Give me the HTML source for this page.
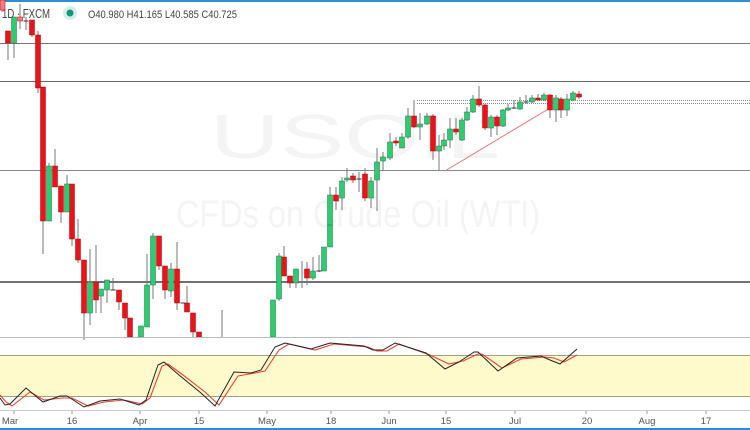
<!DOCTYPE html>
<html><head><meta charset="utf-8"><style>
html,body{margin:0;padding:0;background:#fff;}
body{width:750px;height:430px;overflow:hidden;position:relative;font-family:"Liberation Sans",sans-serif;}
svg{position:absolute;left:0;top:0;}
</style></head><body>
<svg width="750" height="430" viewBox="0 0 750 430" xmlns="http://www.w3.org/2000/svg">
<rect x="0" y="0" width="750" height="2" fill="#2a8fd8"/>
<text x="210" y="158" font-size="62" fill="#f4f4f4" textLength="290" lengthAdjust="spacingAndGlyphs" font-family="Liberation Sans">USOIL</text>
<text x="176" y="227" font-size="38" fill="#f4f4f4" textLength="364" lengthAdjust="spacingAndGlyphs" font-family="Liberation Sans">CFDs on Crude Oil (WTI)</text>
<g stroke-width="1">
<line x1="0" y1="43.5" x2="750" y2="43.5" stroke="#777"/>
<line x1="0" y1="81.5" x2="750" y2="81.5" stroke="#666"/>
<line x1="0" y1="170.5" x2="750" y2="170.5" stroke="#888"/>
<line x1="0" y1="282" x2="750" y2="282" stroke="#444" stroke-width="1.5"/>
<line x1="417" y1="100.5" x2="750" y2="100.5" stroke="#888" stroke-dasharray="1,1"/>
<line x1="417" y1="103.5" x2="750" y2="103.5" stroke="#888" stroke-dasharray="1,1"/>
<line x1="445" y1="171" x2="550" y2="108" stroke="#f07070"/>
</g>
<!-- header -->
<text x="2" y="18" font-size="12.5" fill="#444" textLength="48" lengthAdjust="spacingAndGlyphs">1D · FXCM</text>
<circle cx="70" cy="13" r="7" fill="#d6efea"/>
<circle cx="70" cy="13" r="3.5" fill="#0f9a7c"/>
<text x="88" y="18" font-size="11" fill="#444" textLength="149" lengthAdjust="spacingAndGlyphs">O40.980 H41.165 L40.585 C40.725</text>
<g stroke="#777" stroke-width="1">
<line x1="2" y1="0" x2="2" y2="12"/><line x1="8" y1="31" x2="8" y2="60"/><line x1="14" y1="17" x2="14" y2="58"/><line x1="20" y1="4" x2="20" y2="29"/><line x1="26" y1="17" x2="26" y2="30"/><line x1="32" y1="20" x2="32" y2="37"/><line x1="38" y1="31" x2="38" y2="93"/><line x1="43" y1="87" x2="43" y2="254"/><line x1="49" y1="163" x2="49" y2="221"/><line x1="55" y1="149" x2="55" y2="187"/><line x1="61" y1="186" x2="61" y2="223"/><line x1="67" y1="175" x2="67" y2="212"/><line x1="72" y1="184" x2="72" y2="246"/><line x1="78" y1="219" x2="78" y2="263"/><line x1="84" y1="260" x2="84" y2="340"/><line x1="90" y1="249" x2="90" y2="325"/><line x1="96" y1="245" x2="96" y2="313"/><line x1="101" y1="289" x2="101" y2="313"/><line x1="107" y1="280" x2="107" y2="303"/><line x1="113" y1="278" x2="113" y2="290"/><line x1="119" y1="290" x2="119" y2="310"/><line x1="125" y1="303" x2="125" y2="330"/>
<line x1="147" y1="254" x2="147" y2="327"/><line x1="153" y1="233" x2="153" y2="299"/><line x1="159" y1="236" x2="159" y2="270"/><line x1="165" y1="266" x2="165" y2="299"/><line x1="171" y1="263" x2="171" y2="297"/><line x1="177" y1="242" x2="177" y2="310"/><line x1="187" y1="286" x2="187" y2="312"/><line x1="193" y1="313" x2="193" y2="337"/><line x1="222" y1="310" x2="222" y2="337"/>
<line x1="279" y1="253" x2="279" y2="301"/><line x1="284" y1="246" x2="284" y2="276"/><line x1="290" y1="276" x2="290" y2="288"/><line x1="296" y1="269" x2="296" y2="288"/><line x1="302" y1="261" x2="302" y2="288"/><line x1="307" y1="262" x2="307" y2="285"/><line x1="313" y1="257" x2="313" y2="280"/><line x1="319" y1="255" x2="319" y2="272"/>
<line x1="330" y1="187" x2="330" y2="230"/><line x1="336" y1="187" x2="336" y2="210"/><line x1="342" y1="177" x2="342" y2="210"/><line x1="347" y1="168" x2="347" y2="182"/><line x1="353" y1="173" x2="353" y2="183"/><line x1="359" y1="172" x2="359" y2="192"/><line x1="365" y1="168" x2="365" y2="201"/><line x1="371" y1="177" x2="371" y2="208"/><line x1="377" y1="148" x2="377" y2="211"/><line x1="383" y1="152" x2="383" y2="171"/><line x1="390" y1="133" x2="390" y2="160"/><line x1="396" y1="137" x2="396" y2="146"/><line x1="402" y1="133" x2="402" y2="148"/><line x1="408" y1="108" x2="408" y2="139"/><line x1="414" y1="100" x2="414" y2="128"/><line x1="420" y1="113" x2="420" y2="140"/><line x1="427" y1="113" x2="427" y2="125"/><line x1="433" y1="114" x2="433" y2="160"/><line x1="439" y1="135" x2="439" y2="170"/><line x1="444" y1="133" x2="444" y2="150"/><line x1="450" y1="118" x2="450" y2="148"/><line x1="456" y1="118" x2="456" y2="135"/><line x1="462" y1="118" x2="462" y2="141"/><line x1="467" y1="107" x2="467" y2="121"/><line x1="473" y1="95" x2="473" y2="113"/><line x1="479" y1="86" x2="479" y2="107"/><line x1="485" y1="104" x2="485" y2="130"/><line x1="491" y1="115" x2="491" y2="137"/><line x1="497" y1="115" x2="497" y2="135"/><line x1="503" y1="109" x2="503" y2="127"/><line x1="508" y1="104" x2="508" y2="111"/><line x1="514" y1="100" x2="514" y2="109"/><line x1="520" y1="97" x2="520" y2="110"/><line x1="526" y1="95" x2="526" y2="104"/><line x1="532" y1="95" x2="532" y2="103"/><line x1="538" y1="94" x2="538" y2="101"/><line x1="544" y1="93" x2="544" y2="101"/><line x1="550" y1="94" x2="550" y2="118"/><line x1="556" y1="95" x2="556" y2="122"/><line x1="561" y1="97" x2="561" y2="118"/><line x1="567" y1="94" x2="567" y2="116"/><line x1="573" y1="91" x2="573" y2="101"/><line x1="579" y1="91" x2="579" y2="99"/>
</g>
<g fill="#e8141c" stroke="#b00" stroke-width="0.5">
<rect x="0" y="0" width="5" height="10" fill="#f08080"/><rect x="5.5" y="31" width="5" height="12"/><rect x="17.5" y="17" width="5" height="4" fill="#f08080"/><rect x="29.5" y="20" width="5" height="15"/><rect x="35.5" y="35" width="5" height="53"/><rect x="40.5" y="87" width="5" height="134"/><rect x="52.5" y="166" width="5" height="21"/><rect x="58.5" y="186" width="5" height="26"/><rect x="69.5" y="184" width="5" height="55"/><rect x="75.5" y="239" width="5" height="21"/><rect x="81.5" y="260" width="5" height="53"/><rect x="93.5" y="282" width="5" height="18"/><rect x="116.5" y="290" width="5" height="12"/><rect x="122.5" y="303" width="5" height="15"/><rect x="127.5" y="318" width="5" height="19"/>
<rect x="156.5" y="236" width="5" height="30"/><rect x="162.5" y="266" width="5" height="24"/><rect x="174.5" y="269" width="5" height="34"/><rect x="184.5" y="303" width="5" height="9"/><rect x="190.5" y="313" width="5" height="19"/><rect x="196.5" y="332" width="5" height="5"/>
<rect x="281.5" y="257" width="5" height="19"/><rect x="287.5" y="276" width="5" height="7"/><rect x="304.5" y="269" width="5" height="9"/>
<rect x="333.5" y="195" width="5" height="6"/><rect x="350.5" y="176" width="5" height="4"/><rect x="362.5" y="174" width="5" height="24"/><rect x="393.5" y="141" width="5" height="2"/><rect x="411.5" y="116" width="5" height="11"/><rect x="430.5" y="116" width="5" height="35"/><rect x="453.5" y="129" width="5" height="3"/><rect x="476.5" y="99" width="5" height="6"/><rect x="482.5" y="105" width="5" height="23"/><rect x="494.5" y="117" width="5" height="9"/><rect x="535.5" y="98" width="5" height="2"/><rect x="547.5" y="95" width="5" height="15"/><rect x="558.5" y="99" width="5" height="11"/><rect x="576.5" y="94" width="5" height="3"/>
</g>
<g fill="#2ecc71" stroke="#1a7a45" stroke-width="0.5">
<rect x="11.5" y="17" width="5" height="26"/><rect x="46.5" y="166" width="5" height="55"/><rect x="64.5" y="184" width="5" height="28"/><rect x="87.5" y="282" width="5" height="31"/><rect x="98.5" y="289" width="5" height="7"/><rect x="104.5" y="280" width="5" height="10"/>
<rect x="138.5" y="326" width="5" height="11"/><rect x="144.5" y="285" width="5" height="42"/><rect x="150.5" y="236" width="5" height="49"/><rect x="168.5" y="269" width="5" height="22"/>
<rect x="270.5" y="300" width="5" height="37"/><rect x="276.5" y="256" width="5" height="43"/><rect x="293.5" y="269" width="5" height="14"/><rect x="310.5" y="271" width="5" height="7"/><rect x="321.5" y="247" width="5" height="24"/><rect x="327.5" y="225" width="5" height="22"/><rect x="327.5" y="195" width="5" height="30"/><rect x="339.5" y="181" width="5" height="17"/><rect x="344.5" y="178" width="5" height="2"/><rect x="368.5" y="181" width="5" height="17"/><rect x="374.5" y="162" width="5" height="18"/><rect x="380.5" y="157" width="5" height="4"/><rect x="387.5" y="142" width="5" height="16"/><rect x="399.5" y="137" width="5" height="11"/><rect x="405.5" y="116" width="5" height="21"/><rect x="417.5" y="124" width="5" height="3"/><rect x="424.5" y="116" width="5" height="8"/><rect x="436.5" y="146" width="5" height="5"/><rect x="441.5" y="140" width="5" height="6"/><rect x="447.5" y="129" width="5" height="11"/><rect x="459.5" y="120" width="5" height="20"/><rect x="464.5" y="112" width="5" height="8"/><rect x="470.5" y="99" width="5" height="13"/><rect x="488.5" y="117" width="5" height="11"/><rect x="500.5" y="110" width="5" height="16"/><rect x="505.5" y="108" width="5" height="2"/><rect x="517.5" y="102" width="5" height="7"/><rect x="529.5" y="98" width="5" height="4"/><rect x="541.5" y="95" width="5" height="5"/><rect x="553.5" y="98" width="5" height="12"/><rect x="564.5" y="99" width="5" height="11"/><rect x="570.5" y="93" width="5" height="7"/>
</g>
<g stroke="#333" stroke-width="1">
<line x1="23.5" y1="21" x2="28.5" y2="21"/><line x1="110.5" y1="290" x2="115.5" y2="290"/><line x1="180.5" y1="303" x2="185.5" y2="303"/><line x1="316.5" y1="271" x2="321.5" y2="271"/><line x1="356.5" y1="179" x2="361.5" y2="179"/><line x1="511.5" y1="108" x2="516.5" y2="108"/><line x1="523.5" y1="102" x2="528.5" y2="102"/>
</g>
<!-- stoch panel -->
<line x1="0" y1="337.5" x2="750" y2="337.5" stroke="#bbb"/>
<rect x="0" y="355" width="750" height="41" fill="#fffacc"/>
<line x1="0" y1="355.5" x2="750" y2="355.5" stroke="#a8a080"/>
<line x1="0" y1="396.5" x2="750" y2="396.5" stroke="#a8a080"/>
<polyline fill="none" stroke="#f04030" stroke-width="1.1" points="0,395 6,402 12,406 30,392 44,400 62,398 72,398 88,406 104,402 124,400 142,404 150,398 162,366 168,364 183,375 205,392 219,405 238,376 255,373 265,371 279,350 289,344 315,350 334,344 368,347 377,351 387,351 399,344 430,355 449,364 463,361 478,354 482,354 502,368 521,359 545,357 554,358 564,362 577,355"/>
<polyline fill="none" stroke="#222" stroke-width="1" points="0,398 5,405 10,404 26,388 43,402 60,396 67,396 84,407 100,401 120,399 139,405 146,400 158,365 164,362 179,375 201,393 215,406 234,372 251,373 261,370 275,347 285,343 311,349 330,343 364,346 373,350 383,350 395,343 426,353 445,369 459,362 474,352 478,352 498,371 517,358 541,356 550,360 560,364 577,349"/>
<line x1="0" y1="410.5" x2="750" y2="410.5" stroke="#ccc"/>
<g stroke="#999"><line x1="14" y1="411" x2="14" y2="414"/><line x1="72" y1="411" x2="72" y2="414"/><line x1="140" y1="411" x2="140" y2="414"/><line x1="199" y1="411" x2="199" y2="414"/><line x1="267" y1="411" x2="267" y2="414"/><line x1="331" y1="411" x2="331" y2="414"/><line x1="389" y1="411" x2="389" y2="414"/><line x1="446" y1="411" x2="446" y2="414"/><line x1="515" y1="411" x2="515" y2="414"/><line x1="586" y1="411" x2="586" y2="414"/><line x1="647" y1="411" x2="647" y2="414"/><line x1="706" y1="411" x2="706" y2="414"/></g>
<g font-size="9.5" fill="#555" text-anchor="middle">
<text x="10" y="424">Mar</text><text x="72" y="424">16</text><text x="140" y="424">Apr</text><text x="199" y="424">15</text><text x="267" y="424">May</text><text x="331" y="424">18</text><text x="389" y="424">Jun</text><text x="446" y="424">15</text><text x="515" y="424">Jul</text><text x="587" y="424">20</text><text x="647" y="424">Aug</text><text x="706" y="424">17</text>
</g>
<rect x="0" y="428" width="750" height="2" fill="#2a8fd8"/>
</svg>
</body></html>
